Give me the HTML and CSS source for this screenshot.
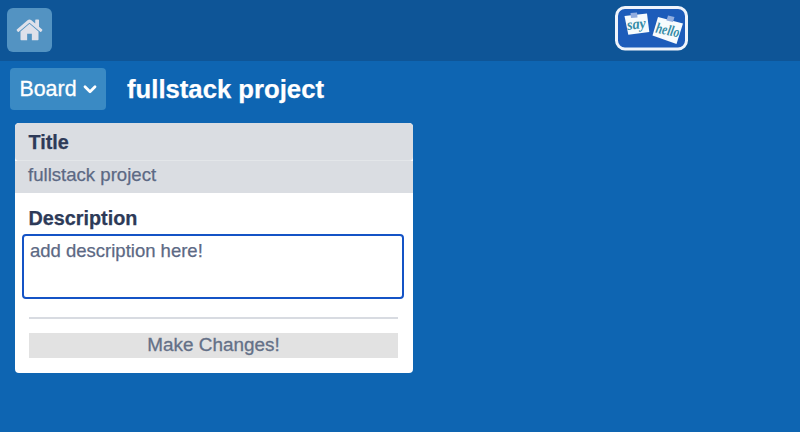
FILE: index.html
```html
<!DOCTYPE html>
<html lang="en">
<head>
<meta charset="utf-8">
<title>fullstack project</title>
<link rel="stylesheet" href="styles.css">
</head>
<body>
<header class="navbar">
  <a class="home" href="#" aria-label="Home">
    <svg width="27" height="22.500" viewBox="0 0 26 22" fill="#dfe1ea">
      <path d="M13 4.7 4.2 12.2V20q0 .7.7.7h5.800v-6.400h4.600v6.400h5.800q.7 0 .7-.7v-7.800z"/>
      <path d="M13 .6q-1.100 0-1.900.6L.6 10.300q-.5.5 0 1l.9 1.100q.5.500 1 0L13 3.600l10.500 8.800q.5.500 1 0l.9-1.100q.5-.5 0-1L22.300 7.600V1.200q0-.6-.6-.6h-2.500q-.6 0-.6.600v3.200l-3.700-3.200Q14.100.600 13 .6z"/>
    </svg>
  </a>
  <a class="logo" href="#" aria-label="say hello">
    <svg width="74" height="46" viewBox="0 0 74 46">
      <rect x="2.500" y="2.500" width="70" height="41.500" rx="8.500" fill="#1d5cba" stroke="#eff4fb" stroke-width="3"/>
      <path d="M10.500 11 33 8.500l2.300 18.500-21 2.700z" fill="#f7fbfd"/>
      <path d="M44 12 69 18.500l-6.500 20.500-24-8.500z" fill="#f7fbfd"/>
      <path d="m16.500 8 6.500-.5.500 5-6.500.5z" fill="#92addf"/>
      <path d="m54 10.500 6.500 1.500-1.500 5-6.500-1.500z" fill="#92addf"/>
      <text class="script" transform="translate(13.500 25) rotate(-7)" textLength="19" lengthAdjust="spacingAndGlyphs">say</text>
      <text class="script" transform="translate(41 27.500) rotate(12)" textLength="24" lengthAdjust="spacingAndGlyphs">hello</text>
    </svg>
  </a>
</header>
<main>
  <div class="toolbar">
    <button class="board">Board
      <svg width="14" height="10" viewBox="0 0 14 10" fill="none" stroke="#fff" stroke-width="2.800" stroke-linecap="round" stroke-linejoin="round"><path d="m2 2.800 5 5 5-5"/></svg>
    </button>
    <h1>fullstack project</h1>
  </div>
  <section class="card">
    <h2 class="card-title">Title</h2>
    <div class="title-value">fullstack project</div>
    <h2 class="description-label">Description</h2>
    <div class="description">add description here!</div>
    <hr>
    <button class="save">Make Changes!</button>
  </section>
</main>
</body>
</html>
```
FILE: styles.css
```css
* { box-sizing: border-box; }
body {
  margin: 0;
  height: 432px;
  overflow: hidden;
  background: #0e65b2;
  font-family: "Liberation Sans", Arial, sans-serif;
  -webkit-text-stroke: 0.25px currentColor;
}
button {
  border: 0;
  padding: 0;
  font-family: inherit;
  -webkit-text-stroke: 0.3px currentColor;
}
h1, h2 { margin: 0; }
.navbar {
  height: 61px;
  padding: 5px 112px 0 7px;
  display: flex;
  justify-content: space-between;
  align-items: flex-start;
  background: #0e5597;
}
.home {
  width: 45px;
  height: 44px;
  margin-top: 3px;
  border-radius: 6px;
  background: #5393c2;
  display: flex;
  align-items: center;
  justify-content: center;
}
.logo svg {
  display: block;
  overflow: visible;
}
.script {
  font: italic bold 15px "Liberation Serif", serif;
  fill: #358ca6;
  -webkit-text-stroke: 0;
}
.toolbar {
  display: flex;
  align-items: center;
  gap: 21px;
  padding: 7px 10px 0;
}
.board {
  width: 96px;
  height: 42px;
  border-radius: 4px;
  background: #3a8ac4;
  color: #fff;
  font-size: 21.400px;
  display: flex;
  align-items: center;
  justify-content: center;
  gap: 6px;
}
h1 {
  color: #fff;
  font-size: 25.700px;
  line-height: 42px;
}
.card {
  width: 398px;
  height: 250px;
  margin: 13px 0 0 15px;
  border-radius: 4px;
  background: #fff;
  overflow: hidden;
  color: #5c6984;
}
h2 {
  font-size: 19.800px;
  color: #2d3a58;
}
.card-title {
  height: 38px;
  padding-left: 13.500px;
  line-height: 38px;
  background: #dadde2;
  border-bottom: 1px solid #e3e6e9;
  border-radius: 4px;
}
.title-value {
  height: 32px;
  padding-left: 13px;
  background: #dadde2;
  font-size: 18.600px;
  line-height: 27px;
}
.description-label {
  height: 41px;
  padding: 13px 0 0 13.500px;
  line-height: 24px;
}
.description {
  width: 382px;
  height: 65px;
  margin-left: 7px;
  padding: 4px 6px;
  border: 2px solid #1453c6;
  border-radius: 4px;
  font-size: 18.500px;
  line-height: 22px;
}
hr {
  height: 2px;
  margin: 18px 15px 14px 14px;
  border: 0;
  background: #d8dbe1;
}
.save {
  display: block;
  width: 369px;
  height: 25px;
  margin-left: 14px;
  padding-bottom: 2px;
  background: #e2e2e2;
  color: #647087;
  font-size: 18.900px;
  line-height: 23px;
}
```
